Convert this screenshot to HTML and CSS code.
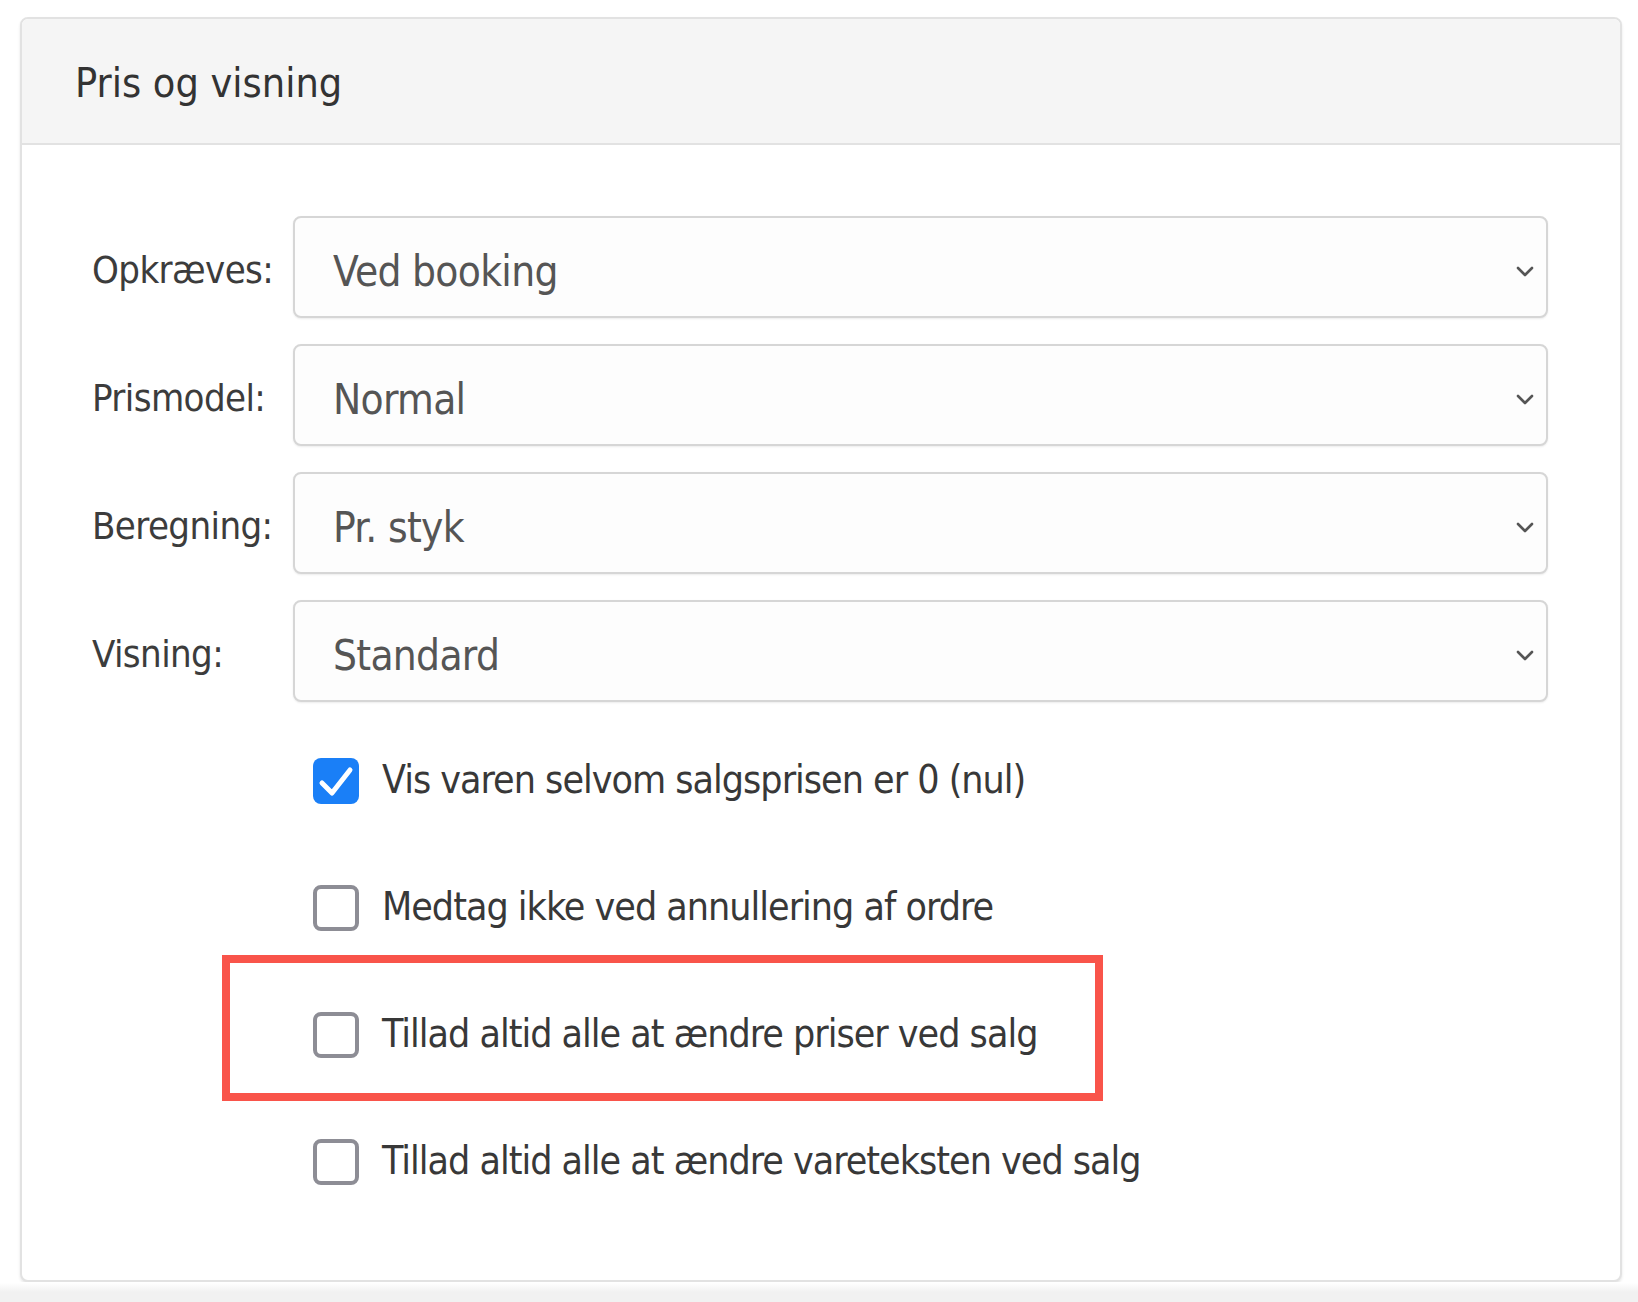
FILE: index.html
```html
<!DOCTYPE html>
<html lang="da">
<head>
    <meta charset="UTF-8">
    <meta name="viewport" content="width=device-width, initial-scale=1.0">
    <title>Pris og visning</title>
    <link rel="stylesheet" href="styles.css">
</head>
<body>
    <div class="panel">
        <div class="panel-heading">
            <h2>Pris og visning</h2>
        </div>

        <div class="panel-body">
            <div class="fields">
                <div class="form-row">
                    <label for="opkraeves">Opkræves:</label>
                    <div class="select-wrap">
                        <select id="opkraeves">
                            <option>Ved booking</option>
                        </select>
                        <svg class="chevron" viewBox="0 0 18 11"><path d="M2 2 L9 9 L16 2"/></svg>
                    </div>
                </div>

                <div class="form-row">
                    <label for="prismodel">Prismodel:</label>
                    <div class="select-wrap">
                        <select id="prismodel">
                            <option>Normal</option>
                        </select>
                        <svg class="chevron" viewBox="0 0 18 11"><path d="M2 2 L9 9 L16 2"/></svg>
                    </div>
                </div>

                <div class="form-row">
                    <label for="beregning">Beregning:</label>
                    <div class="select-wrap">
                        <select id="beregning">
                            <option>Pr. styk</option>
                        </select>
                        <svg class="chevron" viewBox="0 0 18 11"><path d="M2 2 L9 9 L16 2"/></svg>
                    </div>
                </div>

                <div class="form-row">
                    <label for="visning">Visning:</label>
                    <div class="select-wrap">
                        <select id="visning">
                            <option>Standard</option>
                        </select>
                        <svg class="chevron" viewBox="0 0 18 11"><path d="M2 2 L9 9 L16 2"/></svg>
                    </div>
                </div>
            </div>

            <div class="checks">
                <div class="check-row">
                    <span class="box checked">
                        <svg viewBox="0 0 46 46"><path d="M9 25 L19 35 L37 12"/></svg>
                    </span>
                    <span class="check-text">Vis varen selvom salgsprisen er 0 (nul)</span>
                </div>

                <div class="check-row">
                    <span class="box"></span>
                    <span class="check-text">Medtag ikke ved annullering af ordre</span>
                </div>

                <div class="check-row">
                    <span class="box"></span>
                    <span class="check-text">Tillad altid alle at ændre priser ved salg</span>
                    <div class="highlight"></div>
                </div>

                <div class="check-row">
                    <span class="box"></span>
                    <span class="check-text">Tillad altid alle at ændre vareteksten ved salg</span>
                </div>
            </div>
        </div>
    </div>
</body>
</html>
```

FILE: styles.css
```css
html { background: linear-gradient(to bottom, #fff 0, #fff 1283px, #f1f1f1 1292px); min-height: 100%; }
body { margin: 0; padding: 17px 16px 0 20px; font-family: "DejaVu Sans Condensed", "DejaVu Sans", Verdana, sans-serif; font-stretch: condensed; color: #3a3a3a; }
.panel { background: #fff; border: 2px solid #e2e2e2; border-radius: 8px; box-shadow: 0 2px 3px rgba(0,0,0,0.10); overflow: hidden; }
.panel-heading { height: 126px; display: flex; align-items: center; padding: 4px 0 0 53px; box-sizing: border-box; background: #f5f5f5; border-bottom: 2px solid #e2e2e2; }
.panel-heading h2 { margin: 0; font-size: 41px; font-weight: normal; color: #333; }
.panel-body { padding: 71px 72px 55px 70px; }
.fields { display: flex; flex-direction: column; gap: 26px; }
.form-row { display: grid; grid-template-columns: 201px 1fr; align-items: center; }
.form-row label { font-size: 38px; letter-spacing: -0.6px; color: #3c3c3c; padding-top: 6px; }
.select-wrap { position: relative; }
.select-wrap select { display: block; width: 100%; height: 102px; padding: 8px 60px 0 38px; border: 2px solid #d6d6d6; border-radius: 8px; background: #fdfdfd; box-shadow: 0 1px 2px rgba(0,0,0,0.08); font-family: inherit; font-stretch: condensed; font-size: 42px; letter-spacing: -0.7px; color: #555; -webkit-appearance: none; appearance: none; }
.chevron { position: absolute; right: 14px; top: 50px; width: 18px; height: 11px; fill: none; stroke: #555; stroke-width: 2.6; stroke-linecap: round; stroke-linejoin: round; }
.checks { margin-top: 15px; padding-left: 221px; }
.check-row { position: relative; height: 127px; display: flex; align-items: center; gap: 23px; }
.box { width: 46px; height: 46px; box-sizing: border-box; border: 4px solid #8d8d95; border-radius: 8px; background: #fff; flex-shrink: 0; }
.box.checked { border: none; background: #1a7ff7; }
.box svg { display: block; width: 46px; height: 46px; fill: none; stroke: #fff; stroke-width: 5; stroke-linecap: round; stroke-linejoin: round; }
.check-text { font-size: 39px; letter-spacing: -1px; color: #383838; padding-bottom: 2px; }
.highlight { position: absolute; left: -91px; top: -16px; width: 881px; height: 146px; box-sizing: border-box; border: 8.5px solid #f9544a; }
```
